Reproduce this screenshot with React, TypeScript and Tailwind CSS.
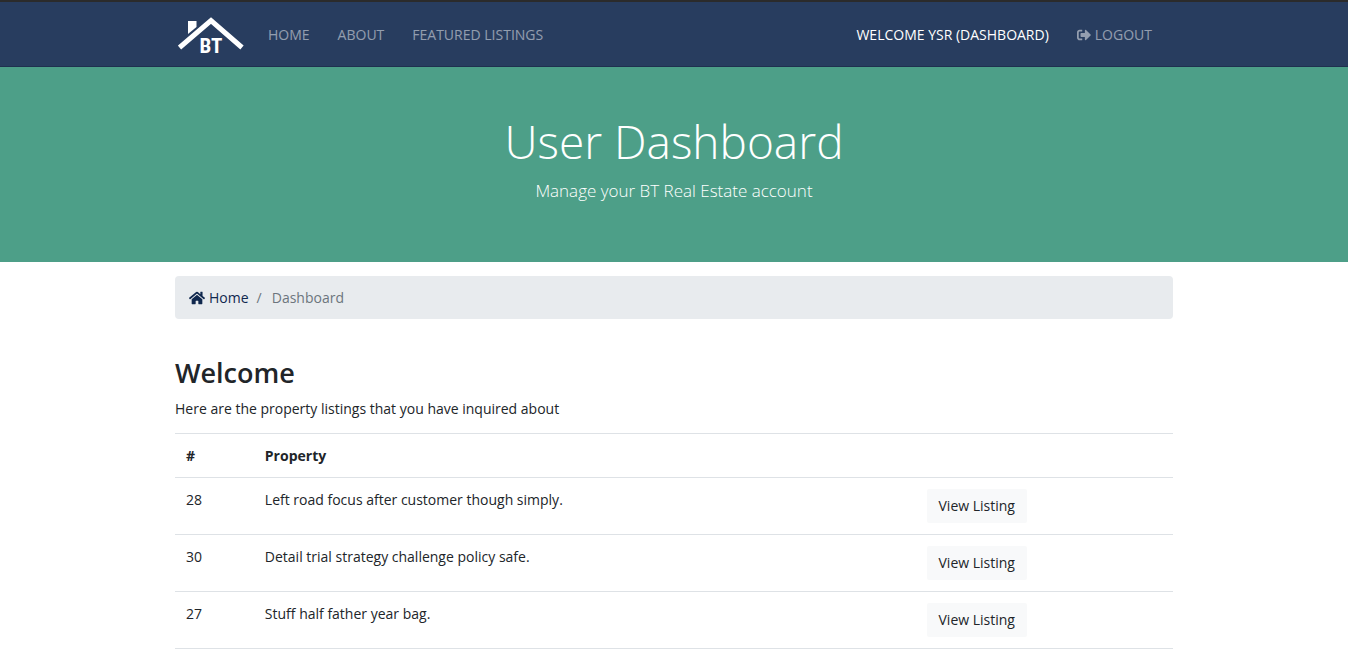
import { FaHome, FaSignOutAlt } from 'react-icons/fa';

const listings = [
  { id: 28, title: 'Left road focus after customer though simply.' },
  { id: 30, title: 'Detail trial strategy challenge policy safe.' },
  { id: 27, title: 'Stuff half father year bag.' },
];

function Logo() {
  return (
    <svg viewBox="0 0 66 48" className="h-12 w-[66px]" role="img" aria-label="BT Real Estate">
      <path d="M10 10h8.500v6l-8.500 7z" fill="#fff" />
      <path d="M1.500 36.500L33 9.500L64 36.500" fill="none" stroke="#fff" strokeWidth="5" />
      <text
        x="33"
        y="42"
        textAnchor="middle"
        fill="#fff"
        fontFamily="'Liberation Sans Narrow', 'Roboto Condensed', 'Open Sans', sans-serif"
        fontWeight="700"
        fontSize="21"
      >
        BT
      </text>
    </svg>
  );
}

function Navbar() {
  return (
    <header className="border-t-2 border-b border-t-[#2b2b2b] border-b-[#1f304f] bg-[#283d5f]">
      <nav className="mx-auto flex h-16 max-w-[998px] items-center px-[3px] pt-0.5 text-sm leading-5 font-medium text-white/50">
        <a href="#home" className="mr-6">
          <Logo />
        </a>
        <a href="#home">HOME</a>
        <a href="#about" className="ml-7">ABOUT</a>
        <a href="#listings" className="ml-7">FEATURED LISTINGS</a>
        <a href="#dashboard" className="ml-auto text-white">WELCOME YSR (DASHBOARD)</a>
        <a href="#logout" className="mr-[18px] ml-7 flex items-center gap-1">
          <FaSignOutAlt className="size-[14px]" />
          LOGOUT
        </a>
      </nav>
    </header>
  );
}

export default function App() {
  return (
    <div className="min-h-screen bg-white font-['Open_Sans','Noto_Sans',sans-serif] text-sm text-[#212529]">
      <Navbar />
      <section className="bg-[#4d9f88] pt-11 pb-14 text-center font-light text-white">
        <h1 className="text-[46px] leading-[60px]">User Dashboard</h1>
        <p className="mt-1.5 mb-0.5 text-[17px] leading-[27px]">Manage your BT Real Estate account</p>
      </section>
      <main className="mx-auto max-w-[998px]">
        <nav aria-label="Breadcrumb" className="mt-[14px] rounded bg-[#e8ebee] px-[14px] py-[11px]">
          <ol className="flex items-center leading-[21px]">
            <li>
              <a href="#home" className="flex items-center gap-1 text-[#10284e]">
                <FaHome className="size-4" />
                Home
              </a>
            </li>
            <li className="flex text-[#6c757d]">
              <span aria-hidden="true" className="mr-2.5 ml-2">/</span>
              <span aria-current="page">Dashboard</span>
            </li>
          </ol>
        </nav>
        <h2 className="mt-9 text-[27px] leading-9 font-semibold">Welcome</h2>
        <p className="mt-2 mb-[14px] leading-5">Here are the property listings that you have inquired about</p>
        <table className="w-full table-fixed border-collapse text-left">
          <colgroup>
            <col className="w-[7.9%]" />
            <col className="w-[66.3%]" />
            <col />
          </colgroup>
          <thead>
            <tr className="border-y border-[#dee2e6]">
              <th scope="col" className="px-[11px] py-[11px] leading-[21px] font-bold">#</th>
              <th scope="col" className="px-[11px] py-[11px] leading-[21px] font-bold">Property</th>
              <td />
            </tr>
          </thead>
          <tbody>
            {listings.map((listing) => (
              <tr key={listing.id} className="border-b border-[#dee2e6] align-top">
                <td className="px-[11px] py-[11px] leading-[21px]">{listing.id}</td>
                <td className="px-[11px] py-[11px] leading-[21px]">{listing.title}</td>
                <td className="px-[11px] py-[11px]">
                  <a href={`#listing-${listing.id}`} className="block w-fit rounded-xs bg-[#f8f9fa] px-3 py-[7px] leading-5">
                    View Listing
                  </a>
                </td>
              </tr>
            ))}
          </tbody>
        </table>
      </main>
    </div>
  );
}
